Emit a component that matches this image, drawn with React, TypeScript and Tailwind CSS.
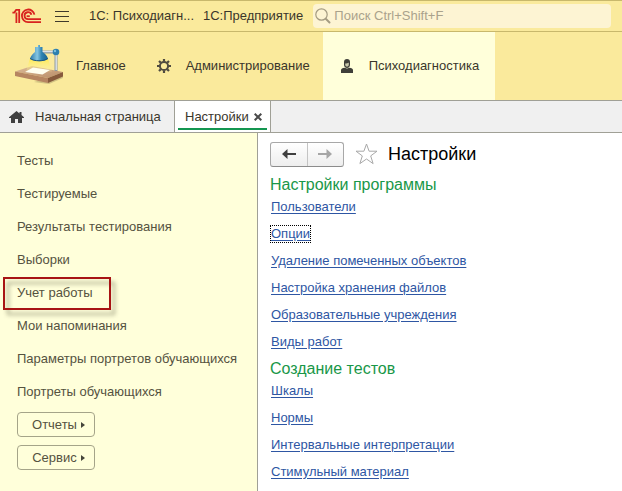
import React from "react";

const sidebarItems = [
  "Тесты",
  "Тестируемые",
  "Результаты тестирования",
  "Выборки",
  "Учет работы",
  "Мои напоминания",
  "Параметры портретов обучающихся",
  "Портреты обучающихся",
];

const sections = [
  {
    title: "Настройки программы",
    links: [
      "Пользователи",
      "Опции",
      "Удаление помеченных объектов",
      "Настройка хранения файлов",
      "Образовательные учреждения",
      "Виды работ",
    ],
  },
  {
    title: "Создание тестов",
    links: ["Шкалы", "Нормы", "Интервальные интерпретации", "Стимульный материал"],
  },
];

function Logo() {
  return (
    <svg width="30" height="16" viewBox="0 0 30 16" fill="none" stroke="#d8231f" strokeWidth="1.8" role="img" aria-label="1C">
      <path d="M0.4 4.6H2.2L4.2 1.9H7.2V15M4.4 15V4.4" />
      <path d="M22.4 6.6A6.3 6.3 0 1 0 16 14.1H29" />
      <path d="M19.4 6.8A3.5 3.5 0 1 0 16 11.2H29" />
      <path d="M14.6 8.2H17.8" />
    </svg>
  );
}

function Lamp() {
  return (
    <svg width="50" height="42" viewBox="0 0 50 42" aria-hidden="true">
      <defs>
        <linearGradient id="shade" x1="0" x2="1">
          <stop offset="0" stopColor="#2a78a8" />
          <stop offset="0.4" stopColor="#86c6e2" />
          <stop offset="0.65" stopColor="#2e82b2" />
          <stop offset="1" stopColor="#1b628f" />
        </linearGradient>
        <linearGradient id="wood" x1="0" x2="1" y1="0" y2="1">
          <stop offset="0" stopColor="#dcbb98" />
          <stop offset="1" stopColor="#b98c68" />
        </linearGradient>
        <linearGradient id="glow" x1="0" x2="0" y1="0" y2="1">
          <stop offset="0" stopColor="#ffe94d" />
          <stop offset="1" stopColor="#fff7a8" stopOpacity="0.1" />
        </linearGradient>
      </defs>
      <path d="M20 37 49 29V33L35 39Z" fill="#a89a68" opacity="0.5" />
      <path d="M1 26.5 18 21 49 27 34 33Z" fill="url(#wood)" />
      <path d="M1 26.5 34 33V38L1 31Z" fill="#b68561" />
      <path d="M34 33 49 27V31.5L34 38Z" fill="#875a3c" />
      <path d="M16 13.5H34L38 27 12 26.5Z" fill="url(#glow)" />
      <path d="M11 27 19 22.5 36 25 28.5 29.5Z" fill="#fffef0" />
      <path d="M28 7H42V26" fill="none" stroke="#8d999e" strokeWidth="3" />
      <path d="M28 6.5H41M42.2 9V25" fill="none" stroke="#dde4e8" strokeWidth="1.4" />
      <path d="M24 0H26V2H28.5V7C31 8.5 33 10.5 34 13.5C31 17 20 17 16 13.5C17 10.5 19 8.5 21 7V2H24Z" fill="url(#shade)" />
      <path d="M16 13.5C20 16.5 30 16.5 34 13.5" stroke="#1b5480" fill="none" />
      <circle cx="42" cy="7" r="3.3" fill="#2d7fae" />
      <circle cx="41" cy="6" r="1.2" fill="#7abfde" />
    </svg>
  );
}

function Gear() {
  return (
    <svg width="14" height="14" viewBox="0 0 14 14" fill="none" stroke="#4f4b40" aria-hidden="true">
      <circle cx="7" cy="7" r="4.1" strokeWidth="2" />
      <path
        d="M7 0V2.5M7 11.5V14M0 7H2.5M11.5 7H14M2 2 3.8 3.8M10.2 10.2 12 12M12 2 10.2 3.8M3.8 10.2 2 12"
        strokeWidth="2.2"
      />
    </svg>
  );
}

function Person() {
  return (
    <svg width="12" height="14" viewBox="0 0 12 14" fill="#3f3f39" aria-hidden="true">
      <path d="M3 3C3 1 4 0 6 0S9 1 9 3V5.5C9 7.5 7.8 9 6 9S3 7.5 3 5.5Z" />
      <path d="M4.2 4.4C5.5 4.4 7 4 7.8 3.4V5.5C7.8 7 7 7.6 6 7.6S4.2 7 4.2 5.5Z" fill="#c9c9ac" />
      <path d="M0 14V11C0 9.8 1.5 9 3.5 8.7L6 9.6 8.5 8.7C10.5 9 12 9.8 12 11V14Z" />
    </svg>
  );
}

function Arrow({ back = false }: { back?: boolean }) {
  return (
    <svg width="14" height="10" viewBox="0 0 14 10" fill={back ? "#404040" : "#a6a6a6"} aria-hidden="true">
      <path d={back ? "M0 5 5.5 0V4H14V6H5.5V10Z" : "M14 5 8.5 0V4H0V6H8.5V10Z"} />
    </svg>
  );
}

function GroupButton({ label }: { label: string }) {
  return (
    <div className="flex h-[33px] items-center">
      <button className="flex h-[25px] w-[78px] items-center justify-center gap-1 rounded border border-[#a5a489] pl-[5px]">
        {label}
        <svg width="4" height="6" viewBox="0 0 4 6" fill="#45453a" aria-hidden="true">
          <path d="M0 0 4 3 0 6Z" />
        </svg>
      </button>
    </div>
  );
}

export default function App() {
  return (
    <div className="flex min-h-screen flex-col bg-white font-['Liberation_Sans',Arial,sans-serif] text-[13px] leading-4 text-[#3a362b]">
      <header className="bg-[#faea9c]">
        <div className="flex h-8 items-center border-y border-[#c8b86c] pr-[11px] pl-3">
          <Logo />
          <button className="ml-[13px] flex h-[11px] w-[14px] flex-col justify-between" aria-label="Меню">
            <span className="h-px w-full bg-[#3f3a2b]" />
            <span className="h-px w-full bg-[#3f3a2b]" />
            <span className="h-px w-full bg-[#3f3a2b]" />
          </button>
          <span className="ml-5 w-[114px] whitespace-nowrap">1С: Психодиагн...</span>
          <span className="whitespace-nowrap">1С:Предприятие</span>
          <label className="ml-[10px] flex h-6 min-w-0 flex-1 items-center gap-[3px] rounded-sm bg-[#fdf4d3] pl-[2px]">
            <svg width="16" height="16" viewBox="0 0 16 16" fill="none" stroke="#a49b82" aria-hidden="true">
              <circle cx="6.5" cy="6.5" r="5.7" strokeWidth="1.2" />
              <path d="M11 11 14.5 14.5" strokeWidth="2" strokeLinecap="round" />
            </svg>
            <input
              className="min-w-0 flex-1 bg-transparent outline-none placeholder:text-[#aaa28c]"
              placeholder="Поиск Ctrl+Shift+F"
              aria-label="Поиск"
            />
          </label>
        </div>
        <nav className="flex h-[68px]">
          <button className="flex items-center gap-3 pl-[14px]">
            <Lamp />
            Главное
          </button>
          <button className="ml-[31px] flex items-center gap-[15px] pr-[13px]">
            <Gear />
            Администрирование
          </button>
          <button className="flex items-center gap-4 bg-[#ffffda] pr-4 pl-[18px]">
            <Person />
            Психодиагностика
          </button>
        </nav>
      </header>

      <div className="flex h-[33px] border-y border-[#a0a096] bg-[#f0f0f0]">
        <button className="flex w-[174px] items-center gap-[11px] pl-[9px]">
          <svg width="15" height="12" viewBox="0 0 15 12" fill="#404040" aria-hidden="true">
            <path d="M7.5 0 10.5 2.4V1H12.5V4L15 6.2V7H13V12H9V8H6V12H2V7H0V6.2Z" />
          </svg>
          Начальная страница
        </button>
        <div className="flex w-[97px] flex-col border-x border-[#a0a096] bg-white px-[3px]">
          <div className="flex h-[27px] items-center justify-between pt-1 pr-[5px] pl-[7px]">
            <span>Настройки</span>
            <button aria-label="Закрыть">
              <svg width="8" height="8" viewBox="0 0 8 8" stroke="#4a4a4a" strokeWidth="2" aria-hidden="true">
                <path d="M0.7 0.7 7.3 7.3M7.3 0.7 0.7 7.3" />
              </svg>
            </button>
          </div>
          <div className="h-[2px] bg-[#149650]" />
        </div>
      </div>

      <div className="flex flex-1">
        <aside className="w-[258px] shrink-0 border-r border-[#a0a096] bg-[#ffffda] pt-[11px] pl-[17px] text-[#55523f]">
          {sidebarItems.map((item) => (
            <div key={item} className="relative flex h-[33px] items-center">
              <button className="whitespace-nowrap">{item}</button>
              {item === "Учет работы" && (
                <div className="pointer-events-none absolute top-[1px] -left-[14px] h-[33px] w-[108px] border-2 border-[#a81414] drop-shadow-[4px_5px_2px_rgba(60,60,40,0.45)]" />
              )}
            </div>
          ))}
          <GroupButton label="Отчеты" />
          <GroupButton label="Сервис" />
        </aside>

        <main className="min-w-0 flex-1 pl-3">
          <div className="flex h-[38px] items-center pt-1">
            <div className="flex h-[25px] w-[74px] rounded-[3px] border border-[#a8a8a8] border-b-[#8c8c8c] bg-linear-to-b from-white to-[#eeeeee]">
              <button className="flex flex-1 items-center justify-center border-r border-[#c4c4c4]" aria-label="Назад">
                <Arrow back />
              </button>
              <button className="flex flex-1 items-center justify-center" aria-label="Вперед">
                <Arrow />
              </button>
            </div>
            <button className="ml-[11px]" aria-label="В избранное">
              <svg width="23" height="22" viewBox="0 0 23 22" fill="white" stroke="#a8a8a8" aria-hidden="true">
                <path d="M11.5 1 14.1 8.2H22L15.7 12.9 18.1 20.6 11.5 16 4.9 20.6 7.3 12.9 1 8.2H8.9Z" />
              </svg>
            </button>
            <h1 className="ml-[10px] text-[18px] leading-5 text-black">Настройки</h1>
          </div>
          {sections.map((section) => (
            <section key={section.title}>
              <h2 className="h-[22px] pt-[5px] text-[16px] leading-[18px] text-[#199748]">{section.title}</h2>
              {section.links.map((link) => (
                <div key={link} className="flex h-[27px] items-center">
                  <a
                    href="#"
                    className={
                      "border border-dotted text-[#2e56a3] underline underline-offset-2 " +
                      (link === "Опции" ? "border-black" : "border-transparent")
                    }
                  >
                    {link}
                  </a>
                </div>
              ))}
            </section>
          ))}
        </main>
      </div>
    </div>
  );
}
